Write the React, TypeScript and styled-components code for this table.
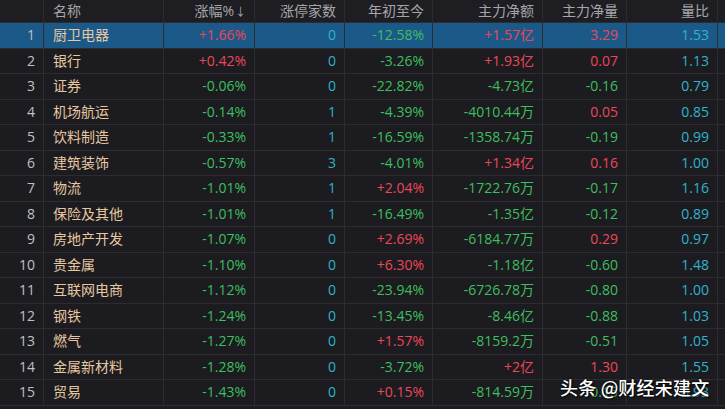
import React from "react";
import styled, { createGlobalStyle } from "styled-components";

const GlobalStyle = createGlobalStyle`
  html, body {
    margin: 0;
    padding: 0;
    background: #1c1c20;
  }
  body {
    font-family: "Open Sans", "Noto Sans CJK SC", sans-serif;
  }
`;

type Tone = "up" | "down" | "zero" | "name" | "index" | "head";

const toneColor: Record<Tone, string> = {
  up: "#ec4658",
  down: "#3dbf5f",
  zero: "#2fb3cc",
  name: "#e6c7a0",
  index: "#bfc0c4",
  head: "#a6a6aa",
};

const COLS = "44px 120px 91px 90px 88px 110px 84px 91px 1fr";

const Page = styled.div`
  position: relative;
  width: 725px;
  height: 409px;
  overflow: hidden;
  background: #1c1c20;
`;

const HeaderRow = styled.div`
  display: grid;
  grid-template-columns: ${COLS};
  height: 23px;
  background: #1e1e22;
  border-bottom: 1px solid #2d2d31;
  box-sizing: border-box;
`;

const Row = styled.div<{ $selected?: boolean }>`
  display: grid;
  grid-template-columns: ${COLS};
  height: 25.5px;
  background: ${(p) => (p.$selected ? "#1b5989" : "#1c1c20")};
  border-bottom: 1px solid #2d2d31;
  box-sizing: border-box;
`;

const Cell = styled.div<{ $tone: Tone; $left?: boolean; $last?: boolean }>`
  display: flex;
  align-items: center;
  justify-content: ${(p) => (p.$left ? "flex-start" : "flex-end")};
  padding-left: ${(p) => (p.$left ? "9px" : "0")};
  padding-right: ${(p) => (p.$left ? "0" : "8px")};
  border-right: ${(p) => (p.$last ? "none" : "1px solid #2d2d31")};
  color: ${(p) => toneColor[p.$tone]};
  font-size: 14px;
  line-height: 1;
  white-space: nowrap;
  overflow: hidden;
`;

const Arrow = styled.span`
  font-size: 11px;
  margin-left: 1px;
`;

// overlay stamp from the screenshot source
const Watermark = styled.div`
  position: absolute;
  left: 560px;
  top: 374px;
  color: #ffffff;
  font-family: "Noto Sans CJK SC", sans-serif;
  font-size: 18px;
  font-weight: 500;
  letter-spacing: 0.2px;
  text-shadow: 0 0 2px rgba(0, 0, 0, 0.9), 1px 1px 2px rgba(0, 0, 0, 0.8);
  white-space: nowrap;
`;

type Item = {
  name: string;
  chg: string;
  limit: string;
  ytd: string;
  net: string;
  vol: string;
  ratio: string;
};

const rows: Item[] = [
  { name: "厨卫电器", chg: "+1.66%", limit: "0", ytd: "-12.58%", net: "+1.57亿", vol: "3.29", ratio: "1.53" },
  { name: "银行", chg: "+0.42%", limit: "0", ytd: "-3.26%", net: "+1.93亿", vol: "0.07", ratio: "1.13" },
  { name: "证券", chg: "-0.06%", limit: "0", ytd: "-22.82%", net: "-4.73亿", vol: "-0.16", ratio: "0.79" },
  { name: "机场航运", chg: "-0.14%", limit: "1", ytd: "-4.39%", net: "-4010.44万", vol: "0.05", ratio: "0.85" },
  { name: "饮料制造", chg: "-0.33%", limit: "1", ytd: "-16.59%", net: "-1358.74万", vol: "-0.19", ratio: "0.99" },
  { name: "建筑装饰", chg: "-0.57%", limit: "3", ytd: "-4.01%", net: "+1.34亿", vol: "0.16", ratio: "1.00" },
  { name: "物流", chg: "-1.01%", limit: "1", ytd: "+2.04%", net: "-1722.76万", vol: "-0.17", ratio: "1.16" },
  { name: "保险及其他", chg: "-1.01%", limit: "1", ytd: "-16.49%", net: "-1.35亿", vol: "-0.12", ratio: "0.89" },
  { name: "房地产开发", chg: "-1.07%", limit: "0", ytd: "+2.69%", net: "-6184.77万", vol: "0.29", ratio: "0.97" },
  { name: "贵金属", chg: "-1.10%", limit: "0", ytd: "+6.30%", net: "-1.18亿", vol: "-0.60", ratio: "1.48" },
  { name: "互联网电商", chg: "-1.12%", limit: "0", ytd: "-23.94%", net: "-6726.78万", vol: "-0.80", ratio: "1.00" },
  { name: "钢铁", chg: "-1.24%", limit: "0", ytd: "-13.45%", net: "-8.46亿", vol: "-0.88", ratio: "1.03" },
  { name: "燃气", chg: "-1.27%", limit: "0", ytd: "+1.57%", net: "-8159.2万", vol: "-0.51", ratio: "1.05" },
  { name: "金属新材料", chg: "-1.28%", limit: "0", ytd: "-3.72%", net: "+2亿", vol: "1.30", ratio: "1.55" },
  { name: "贸易", chg: "-1.43%", limit: "0", ytd: "+0.15%", net: "-814.59万", vol: "-0.15", ratio: "0.93" },
];

const sign = (v: string): Tone => (v.startsWith("-") ? "down" : "up");

const App: React.FC = () => {
  return (
    <Page>
      <GlobalStyle />
      <HeaderRow>
        <Cell $tone="head" />
        <Cell $tone="head" $left>名称</Cell>
        <Cell $tone="head">
          涨幅%<Arrow>↓</Arrow>
        </Cell>
        <Cell $tone="head">涨停家数</Cell>
        <Cell $tone="head">年初至今</Cell>
        <Cell $tone="head">主力净额</Cell>
        <Cell $tone="head">主力净量</Cell>
        <Cell $tone="head">量比</Cell>
        <Cell $tone="head" $last />
      </HeaderRow>

      {rows.map((r, i) => (
        <Row key={r.name} $selected={i === 0}>
          <Cell $tone="index">{i + 1}</Cell>
          <Cell $tone="name" $left>{r.name}</Cell>
          <Cell $tone={sign(r.chg)}>{r.chg}</Cell>
          <Cell $tone="zero">{r.limit}</Cell>
          <Cell $tone={sign(r.ytd)}>{r.ytd}</Cell>
          <Cell $tone={sign(r.net)}>{r.net}</Cell>
          <Cell $tone={sign(r.vol)}>{r.vol}</Cell>
          <Cell $tone="zero">{r.ratio}</Cell>
          <Cell $tone="zero" $last />
        </Row>
      ))}

      <Watermark>头条 @财经宋建文</Watermark>
    </Page>
  );
};

export default App;
